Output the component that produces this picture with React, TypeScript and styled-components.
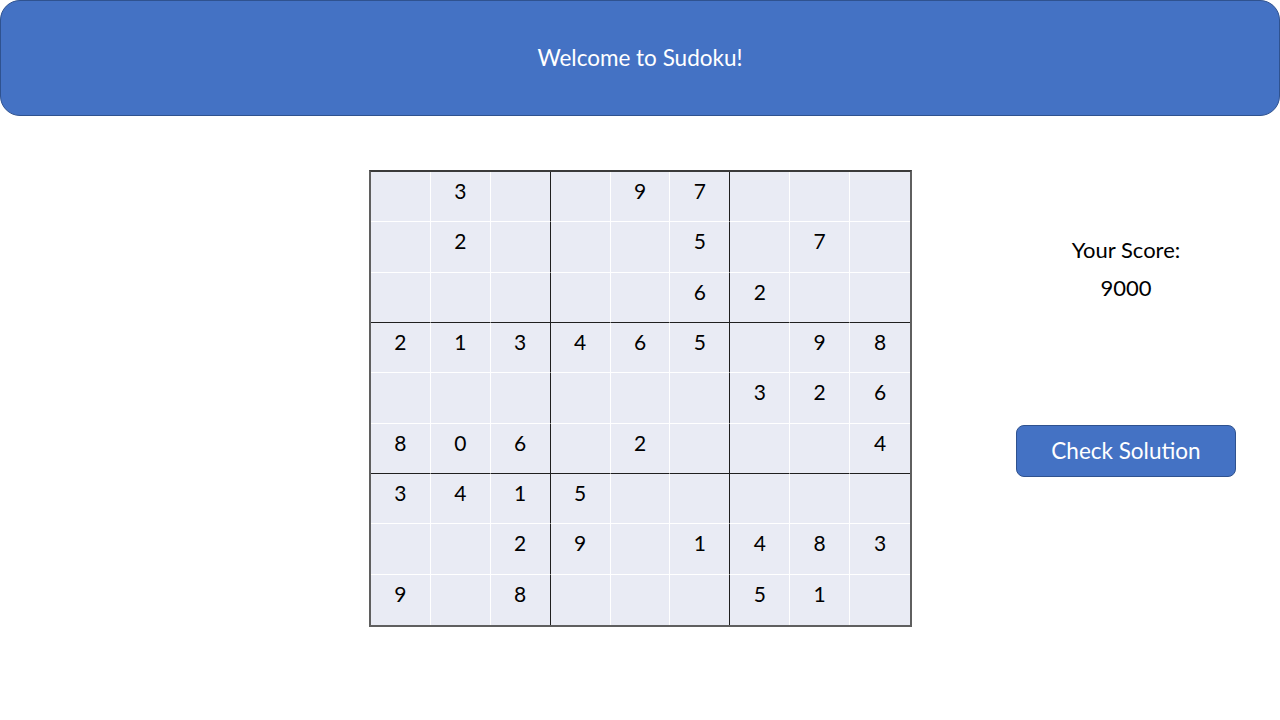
import React from 'react';
import styled, { createGlobalStyle } from 'styled-components';

const GlobalStyle = createGlobalStyle`
  html, body {
    margin: 0;
    padding: 0;
    background: #ffffff;
  }
  body {
    font-family: Lato, "Open Sans", "Liberation Sans", sans-serif;
    color: #000000;
  }
`;

const puzzle: (number | null)[][] = [
  [null, 3, null, null, 9, 7, null, null, null],
  [null, 2, null, null, null, 5, null, 7, null],
  [null, null, null, null, null, 6, 2, null, null],
  [2, 1, 3, 4, 6, 5, null, 9, 8],
  [null, null, null, null, null, null, 3, 2, 6],
  [8, 0, 6, null, 2, null, null, null, 4],
  [3, 4, 1, 5, null, null, null, null, null],
  [null, null, 2, 9, null, 1, 4, 8, 3],
  [9, null, 8, null, null, null, 5, 1, null],
];

const App = () => {
  return (
    <Page>
      <GlobalStyle />
      <Header>Welcome to Sudoku!</Header>
      <Main>
        <Board>
          {puzzle.map((row, r) =>
            row.map((value, c) => (
              <Cell key={`${r}-${c}`} $boxRight={c === 2 || c === 5} $boxBottom={r === 2 || r === 5} $lastCol={c === 8} $lastRow={r === 8}>
                {value !== null ? value : ''}
              </Cell>
            ))
          )}
        </Board>
        <Side>
          <ScoreLabel>Your Score:</ScoreLabel>
          <ScoreValue>9000</ScoreValue>
          <CheckButton>Check Solution</CheckButton>
        </Side>
      </Main>
    </Page>
  );
};

const Page = styled.div`
  width: 1280px;
  height: 720px;
  display: flex;
  flex-direction: column;
  overflow: hidden;
`;

const Header = styled.div`
  box-sizing: border-box;
  height: 116px;
  background: #4472c4;
  border: 1px solid #2f528f;
  border-radius: 20px;
  display: flex;
  align-items: center;
  justify-content: center;
  color: #ffffff;
  font-size: 22.5px;
  padding-bottom: 2px;
`;

const Main = styled.div`
  display: flex;
  flex-direction: row;
  align-items: flex-start;
  padding: 54px 0 0 369px;
`;

const Board = styled.div`
  box-sizing: border-box;
  width: 543px;
  height: 457px;
  border: 2px solid #5f5f5f;
  border-top-color: #3a3a3a;
  display: grid;
  grid-template-columns: repeat(9, 1fr);
  grid-template-rows: repeat(9, 1fr);
  background: #e9ebf4;
`;

const Cell = styled.div<{ $boxRight: boolean; $boxBottom: boolean; $lastCol: boolean; $lastRow: boolean }>`
  box-sizing: border-box;
  border-right: ${(p) => (p.$lastCol ? 'none' : p.$boxRight ? '1px solid #1f1f1f' : '1px solid #ffffff')};
  border-bottom: ${(p) => (p.$lastRow ? 'none' : p.$boxBottom ? '1px solid #1f1f1f' : '1px solid #ffffff')};
  text-align: center;
  font-size: 21px;
  line-height: 24px;
  padding-top: 7px;
`;

const Side = styled.div`
  width: 220px;
  margin-left: 104px;
  padding-top: 68px;
  display: flex;
  flex-direction: column;
  align-items: center;
`;

const ScoreLabel = styled.div`
  font-size: 22px;
  line-height: 24px;
`;

const ScoreValue = styled.div`
  font-size: 22px;
  line-height: 24px;
  margin-top: 14px;
`;

const CheckButton = styled.button`
  box-sizing: border-box;
  margin-top: 125px;
  width: 220px;
  height: 52px;
  background: #4472c4;
  border: 1px solid #2f528f;
  border-radius: 8px;
  color: #ffffff;
  font-family: inherit;
  font-size: 22.5px;
  padding-bottom: 3px;
  cursor: pointer;
`;

export default App;
